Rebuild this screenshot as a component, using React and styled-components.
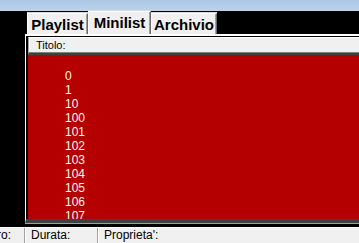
import React from 'react'
import styled, { createGlobalStyle } from 'styled-components'

const GlobalStyle = createGlobalStyle`
  html, body {
    margin: 0;
    padding: 0;
    background: #000;
  }
  body {
    font-family: "Liberation Sans", Arial, sans-serif;
  }
`

const items = ['0', '1', '10', '100', '101', '102', '103', '104', '105', '106', '107', '108']

const App = () => {
  return (
    <Page>
      <GlobalStyle />
      <TitleStrip />
      <Body>
        <TabRow>
          <Tab width={61}>Playlist</Tab>
          <Tab width={63} active>Minilist</Tab>
          <Tab width={66}>Archivio</Tab>
        </TabRow>
        <Panel>
          <Header>
            <HeaderCell>Titolo:</HeaderCell>
          </Header>
          <List>
            {items.map((it) => (
              <Item key={it}>{it}</Item>
            ))}
          </List>
        </Panel>
      </Body>
      <StatusBar>
        <StatusCell width={25} clipped>Numero:</StatusCell>
        <StatusCell width={73}>Durata:</StatusCell>
        <StatusCell>Proprieta':</StatusCell>
      </StatusBar>
    </Page>
  )
}

const Page = styled.div`
  width: 359px;
  height: 243px;
  overflow: hidden;
  display: flex;
  flex-direction: column;
  background: #000;
`

const TitleStrip = styled.div`
  height: 11px;
  flex-shrink: 0;
  background: linear-gradient(180deg, #adc7e5, #bcd2ea);
`

const Body = styled.div`
  display: flex;
  flex-direction: column;
  padding: 0 0 4px 25px;
  background: #000;
`

const TabRow = styled.div`
  height: 23px;
  display: flex;
  align-items: flex-end;
  margin-left: 2px;
`

const Tab = styled.div`
  box-sizing: border-box;
  width: ${(p) => p.width}px;
  height: ${(p) => (p.active ? 23 : 21)}px;
  padding-bottom: ${(p) => (p.active ? 2 : 0)}px;
  line-height: 21px;
  text-align: center;
  font-size: 15px;
  font-weight: bold;
  color: #000;
  background: #f0f0f0;
  border-top: 1px solid #fff;
  border-left: 1px solid #fff;
  border-right: 1px solid #696969;
  box-shadow: inset -1px 0 #a0a0a0, 0 -1px #d8d8d8;
  white-space: nowrap;
`

const Panel = styled.div`
  display: flex;
  flex-direction: column;
  border-top: 2px solid #fff;
  border-left: 1px solid #fff;
  border-bottom: 4px solid #404040;
  padding: 1px 0 0 2px;
  box-shadow: 0 1px #a0a0a0;
`

const Header = styled.div`
  display: flex;
  height: 15px;
  background: #f0f0f0;
  border-top: 1px solid #fff;
  border-left: 1px solid #a0a0a0;
  border-bottom: 2px solid #404040;
  box-shadow: inset 0 -1px #808080, inset 1px 0 #fff;
`

const HeaderCell = styled.div`
  padding-left: 7px;
  font-size: 11px;
  line-height: 15px;
  color: #000;
`

const List = styled.div`
  height: 164px;
  box-sizing: border-box;
  overflow: hidden;
  background: #b40000;
  padding: 14px 0 0 37px;
`

const Item = styled.div`
  font-size: 12px;
  line-height: 14px;
  color: #fffbea;
`

const StatusBar = styled.div`
  display: flex;
  height: 15px;
  background: #f0f0f0;
  border-top: 1px solid #fff;
  font-size: 12px;
  line-height: 15px;
  color: #000;
`

const StatusCell = styled.div`
  display: flex;
  justify-content: ${(p) => (p.clipped ? 'flex-end' : 'flex-start')};
  ${(p) => (p.width ? `width: ${p.width}px; flex-shrink: 0;` : 'flex: 1;')}
  padding: ${(p) => (p.clipped ? '0 13px 0 0' : '0 0 0 6px')};
  box-sizing: border-box;
  overflow: hidden;
  white-space: nowrap;
  border-right: 1px solid #a0a0a0;
  box-shadow: 1px 0 #fff;
  &:last-child {
    border-right: none;
    box-shadow: none;
  }
`

export default App
